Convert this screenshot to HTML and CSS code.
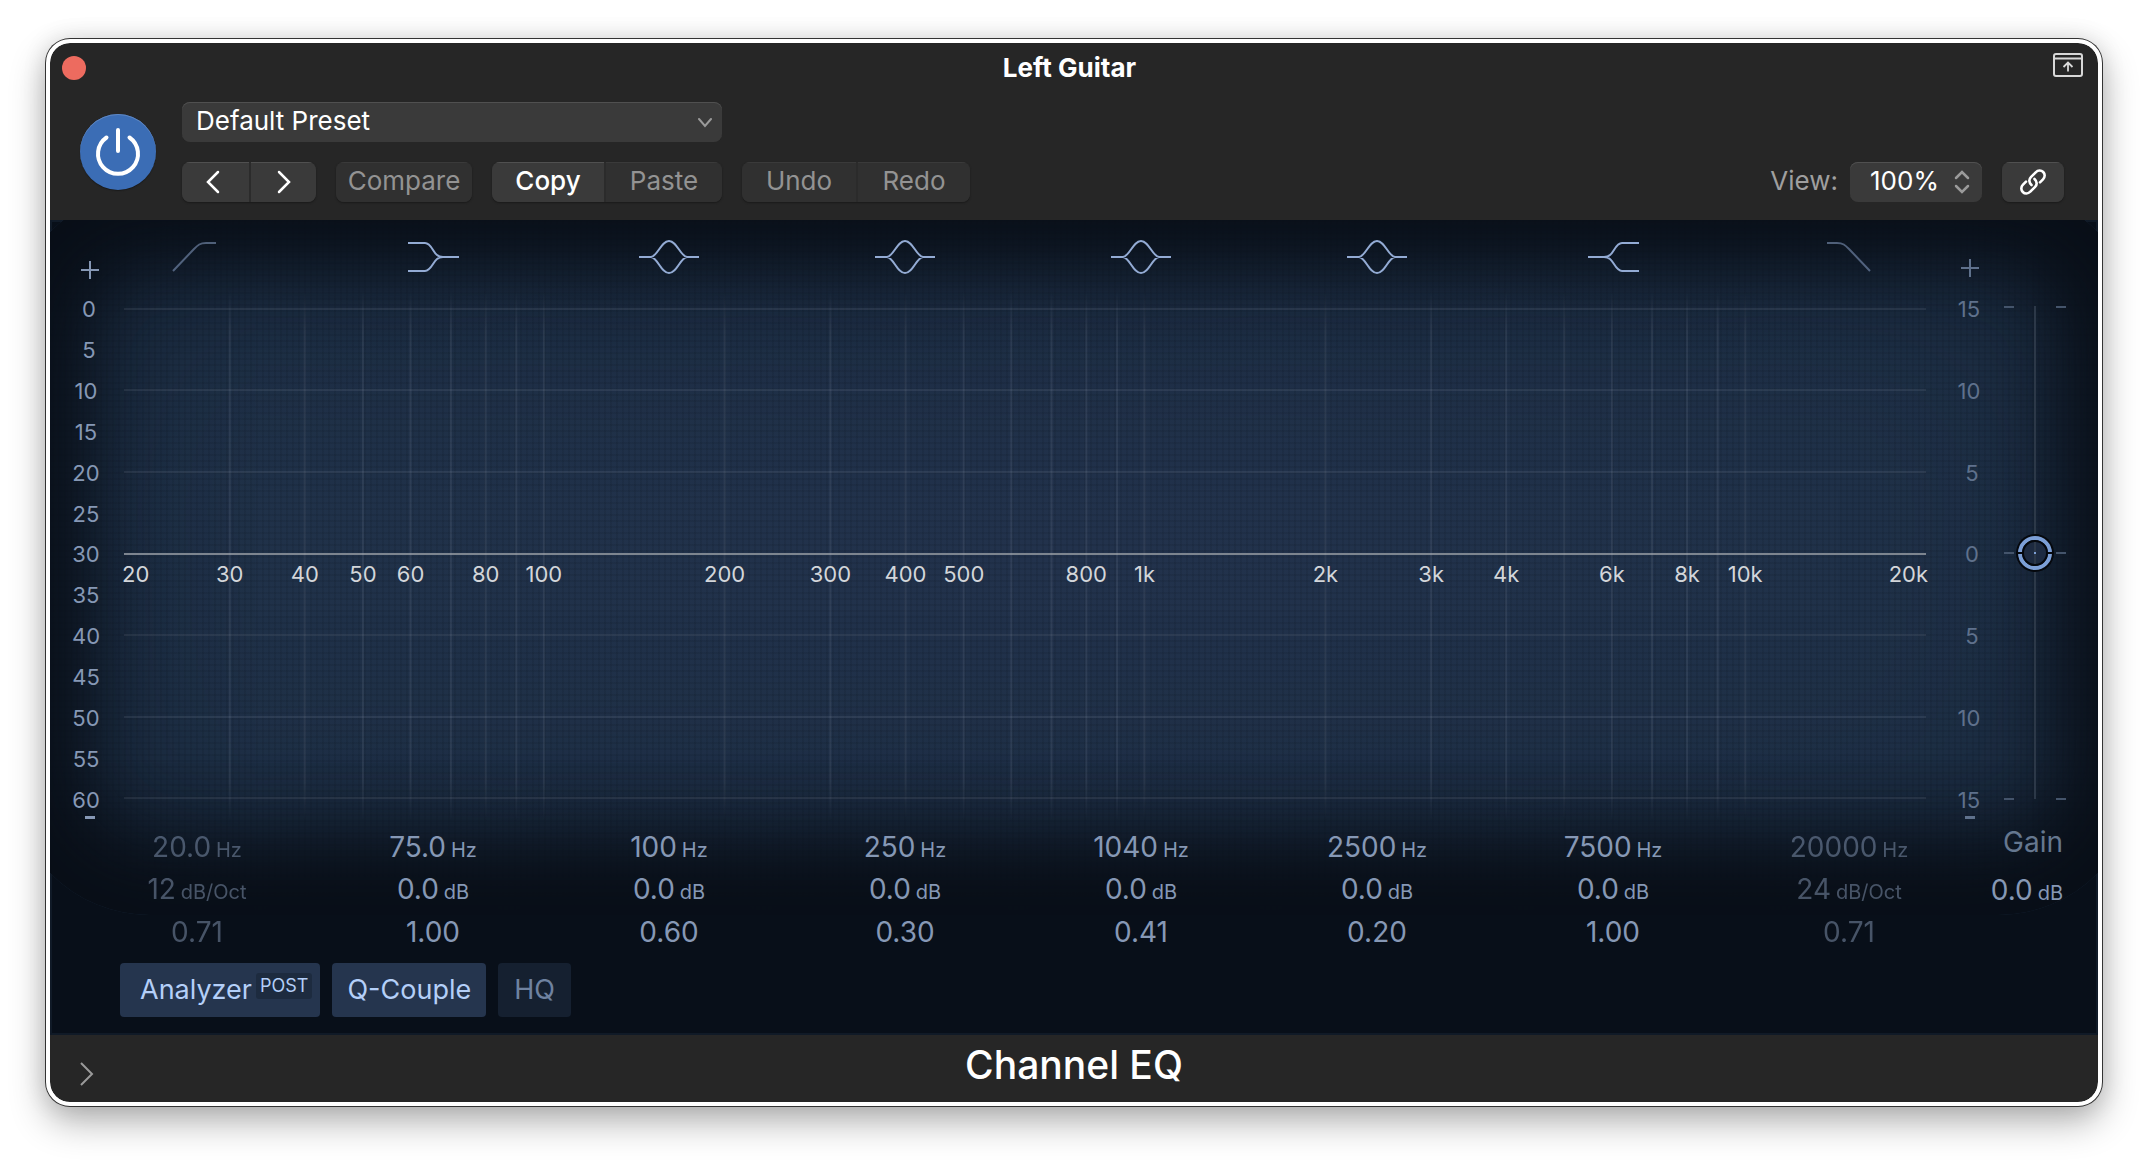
FILE: index.html
```html
<!DOCTYPE html>
<html lang="en">
<head>
<meta charset="utf-8">
<title>Channel EQ – Left Guitar</title>
<link rel="stylesheet" href="styles.css">
</head>
<body>
<main class="window">
  <header class="header">
    <div class="titlebar">
      <button class="close" type="button" aria-label="Close"></button>
      <h1 class="title">Left Guitar</h1>
      <button class="bare" type="button" aria-label="Pin window">
        <svg class="icon" width="30" height="24" viewBox="0 0 30 24"><rect x="1" y="1" width="28" height="22" rx="2" stroke-width="2"/><path d="M1 5.500H29" stroke-width="2"/><path d="M15 18.500V9.500M10.500 14L15 9.500L19.500 14" stroke-width="1.800"/></svg>
      </button>
    </div>
    <div class="controls">
      <button class="power" type="button" aria-label="Power">
        <svg class="icon" width="52" height="52" viewBox="0 0 52 52"><path d="M14.500 11.500A20 20 0 1 0 37.500 11.500M26 4V25" stroke-width="4" stroke-linecap="round"/></svg>
      </button>
      <div class="rows">
        <div class="picker preset">
          <select aria-label="Preset"><option>Default Preset</option></select>
          <svg class="icon picker-icon" width="14" height="10" viewBox="0 0 14 10"><path d="M1 1L7 8L13 1" stroke-width="2" stroke-linecap="round"/></svg>
        </div>
        <div class="row">
          <div class="group">
            <button type="button" class="nav prev" aria-label="Previous preset"><svg class="icon" width="14" height="24" viewBox="0 0 14 24"><path d="M12 2L2 12L12 22" stroke-width="2.500" stroke-linecap="round"/></svg></button>
            <button type="button" class="nav" aria-label="Next preset"><svg class="icon" width="14" height="24" viewBox="0 0 14 24"><path d="M2 2L12 12L2 22" stroke-width="2.500" stroke-linecap="round"/></svg></button>
          </div>
          <div class="group"><button type="button" class="compare" disabled>Compare</button></div>
          <div class="group">
            <button type="button" class="copy">Copy</button>
            <button type="button" class="paste" disabled>Paste</button>
          </div>
          <div class="group">
            <button type="button" class="undo" disabled>Undo</button>
            <button type="button" class="undo" disabled>Redo</button>
          </div>
          <div class="view">
            <label for="zoom">View:</label>
            <div class="picker zoom">
              <select id="zoom"><option>100%</option></select>
              <svg class="icon picker-icon" width="16" height="24" viewBox="0 0 16 24"><path d="M2 8L8 2L14 8M2 16L8 22L14 16" stroke-width="2.500" stroke-linecap="round"/></svg>
            </div>
            <div class="group"><button type="button" class="link" aria-label="Link"><svg class="icon" width="28" height="28" viewBox="0 0 28 28"><g stroke-width="2.600" stroke-linecap="round"><path d="M12.500 17C9.800 14.500 9.700 11.300 11.900 9.100L16.700 4.300C19 2 22.200 2 24.200 4C26.200 6 26.200 9.100 24 11.300L21 14.300"/><path d="M15.500 11C18.200 13.500 18.300 16.700 16.100 18.900L11.300 23.700C9 26 5.800 26 3.800 24C1.800 22 1.800 18.900 4 16.700L7 13.700"/></g></svg></button></div>
          </div>
        </div>
      </div>
    </div>
  </header>

  <section class="eq" aria-label="Equalizer">
    <div class="sign sign-left">
      <svg class="icon" width="18" height="18" viewBox="0 0 18 18"><path d="M9 0V18M0 9H18" stroke-width="2"/></svg>
    </div>
    <div class="bands">
      <button type="button" class="bare off" aria-label="Low cut"><svg class="icon" width="62" height="34" viewBox="0 0 62 34"><path d="M7 31L28 9C32 5 34 3 40 3H50" stroke-width="2"/></svg></button>
      <button type="button" class="bare" aria-label="Low shelf"><svg class="icon" width="62" height="34" viewBox="0 0 62 34"><path d="M6 3H23C29 3 31 12 35 15C37 17 38 17 41 17H57M6 31H23C29 31 31 22 35 19C37 17 38 17 41 17" stroke-width="2"/></svg></button>
      <button type="button" class="bare" aria-label="Peak 1"><svg class="icon" width="62" height="34" viewBox="0 0 62 34"><path d="M1 17H13C20 16 23 1 31 1S42 16 49 17H61M13 17C20 18 23 33 31 33S42 18 49 17" stroke-width="2"/></svg></button>
      <button type="button" class="bare" aria-label="Peak 2"><svg class="icon" width="62" height="34" viewBox="0 0 62 34"><path d="M1 17H13C20 16 23 1 31 1S42 16 49 17H61M13 17C20 18 23 33 31 33S42 18 49 17" stroke-width="2"/></svg></button>
      <button type="button" class="bare" aria-label="Peak 3"><svg class="icon" width="62" height="34" viewBox="0 0 62 34"><path d="M1 17H13C20 16 23 1 31 1S42 16 49 17H61M13 17C20 18 23 33 31 33S42 18 49 17" stroke-width="2"/></svg></button>
      <button type="button" class="bare" aria-label="Peak 4"><svg class="icon" width="62" height="34" viewBox="0 0 62 34"><path d="M1 17H13C20 16 23 1 31 1S42 16 49 17H61M13 17C20 18 23 33 31 33S42 18 49 17" stroke-width="2"/></svg></button>
      <button type="button" class="bare" aria-label="High shelf"><svg class="icon" width="62" height="34" viewBox="0 0 62 34"><path d="M57 3H40C34 3 32 12 28 15C26 17 25 17 22 17H6M57 31H40C34 31 32 22 28 19C26 17 25 17 22 17" stroke-width="2"/></svg></button>
      <button type="button" class="bare off" aria-label="High cut"><svg class="icon" width="62" height="34" viewBox="0 0 62 34"><path d="M9 3H19C25 3 27 5 31 9L52 31" stroke-width="2"/></svg></button>
    </div>
    <div class="sign sign-right">
      <svg class="icon" width="18" height="18" viewBox="0 0 18 18"><path d="M9 0V18M0 9H18" stroke-width="2"/></svg>
    </div>

    <ul class="scale scale-left">
      <li class="one">0</li><li class="one">5</li><li>10</li><li>15</li><li>20</li><li>25</li><li>30</li><li>35</li><li>40</li><li>45</li><li>50</li><li>55</li><li>60</li>
    </ul>
    <div class="plot">
      <svg class="levels">
        <path d="M0 20H4000M0 101H4000M0 183H4000M0 346H4000M0 428H4000M0 509H4000"/>
        <path class="zero" d="M0 265H4000"/>
      </svg>
      <svg class="pitches">
        <line x1="5.87%" x2="5.87%" y2="100%"/><line x1="10.03%" x2="10.03%" y2="100%"/><line x1="13.26%" x2="13.26%" y2="100%"/><line x1="15.90%" x2="15.90%" y2="100%"/><line x1="18.14%" x2="18.14%" y2="100%"/><line x1="20.07%" x2="20.07%" y2="100%"/><line x1="21.77%" x2="21.77%" y2="100%"/><line x1="23.30%" x2="23.30%" y2="100%"/>
        <line x1="33.33%" x2="33.33%" y2="100%"/><line x1="39.20%" x2="39.20%" y2="100%"/><line x1="43.37%" x2="43.37%" y2="100%"/><line x1="46.60%" x2="46.60%" y2="100%"/><line x1="49.24%" x2="49.24%" y2="100%"/><line x1="51.47%" x2="51.47%" y2="100%"/><line x1="53.40%" x2="53.40%" y2="100%"/><line x1="55.11%" x2="55.11%" y2="100%"/><line x1="56.63%" x2="56.63%" y2="100%"/>
        <line x1="66.67%" x2="66.67%" y2="100%"/><line x1="72.54%" x2="72.54%" y2="100%"/><line x1="76.70%" x2="76.70%" y2="100%"/><line x1="79.93%" x2="79.93%" y2="100%"/><line x1="82.57%" x2="82.57%" y2="100%"/><line x1="84.80%" x2="84.80%" y2="100%"/><line x1="86.74%" x2="86.74%" y2="100%"/><line x1="88.44%" x2="88.44%" y2="100%"/><line x1="89.97%" x2="89.97%" y2="100%"/>
      </svg>
      <ul class="freqs">
        <li class="first">20</li>
        <li style="left:5.87%">30</li><li style="left:10.03%">40</li><li style="left:13.26%">50</li><li style="left:15.90%">60</li><li style="left:20.07%">80</li><li style="left:23.30%">100</li>
        <li style="left:33.33%">200</li><li style="left:39.20%">300</li><li style="left:43.37%">400</li><li style="left:46.60%">500</li><li style="left:53.40%">800</li><li style="left:56.63%">1k</li>
        <li style="left:66.67%">2k</li><li style="left:72.54%">3k</li><li style="left:76.70%">4k</li><li style="left:82.57%">6k</li><li style="left:86.74%">8k</li><li style="left:89.97%">10k</li>
        <li class="last">20k</li>
      </ul>
    </div>
    <ul class="scale scale-right">
      <li>15</li><li>10</li><li class="one">5</li><li class="one">0</li><li class="one">5</li><li>10</li><li>15</li>
    </ul>
    <svg class="fader" width="64" height="533" viewBox="0 0 64 533" role="img" aria-label="Gain fader">
      <path class="track" d="M32 17V510"/>
      <path class="ticks" d="M1 18H11M53 18H63M1 264H11M53 264H63M1 510H11M53 510H63"/>
      <circle cx="32" cy="264" r="19" fill="#05080d"/>
      <circle cx="32" cy="264" r="15" fill="#1d2a40" stroke="#7c9fd6" stroke-width="4"/>
      <circle cx="32" cy="264" r="12" fill="none" stroke="#05080d" stroke-width="2"/>
      <path d="M13 264H20M44 264H51" stroke="#05080d" stroke-width="2"/>
      <path class="track" d="M32 253V275"/>
      <rect x="31" y="263" width="2" height="2" fill="#7c9fd6"/>
    </svg>
    <div class="minus minus-left"></div>
    <div class="minus minus-right"></div>

    <table class="values">
      <tr><td class="off">20.0 <small>Hz</small></td><td>75.0 <small>Hz</small></td><td>100 <small>Hz</small></td><td>250 <small>Hz</small></td><td>1040 <small>Hz</small></td><td>2500 <small>Hz</small></td><td>7500 <small>Hz</small></td><td class="off">20000 <small>Hz</small></td></tr>
      <tr><td class="off">12 <small>dB/Oct</small></td><td>0.0 <small>dB</small></td><td>0.0 <small>dB</small></td><td>0.0 <small>dB</small></td><td>0.0 <small>dB</small></td><td>0.0 <small>dB</small></td><td>0.0 <small>dB</small></td><td class="off">24 <small>dB/Oct</small></td></tr>
      <tr><td class="off">0.71</td><td>1.00</td><td>0.60</td><td>0.30</td><td>0.41</td><td>0.20</td><td>1.00</td><td class="off">0.71</td></tr>
    </table>
    <div class="gain">
      <span class="gain-label">Gain</span>
      <span>0.0 <small>dB</small></span>
    </div>

    <div class="modes">
      <button type="button" class="mode analyzer">Analyzer<span class="post">POST</span></button>
      <button type="button" class="mode">Q-Couple</button>
      <button type="button" class="mode mode-off">HQ</button>
    </div>
  </section>

  <footer class="footer">
    <button class="bare" type="button" aria-label="Show more"><svg class="icon" width="14" height="24" viewBox="0 0 14 24"><path d="M1 1L12 12L1 23" stroke-width="2"/></svg></button>
    <h2 class="name">Channel EQ</h2>
  </footer>
</main>
</body>
</html>
```

FILE: styles.css
```css
* {
  box-sizing: border-box;
}

body {
  margin: 0;
  padding: 39px 46px 54px;
  background: #fff;
  color: #fff;
  font: 26px/32px Inter, "Liberation Sans", sans-serif;
}

button,
select {
  margin: 0;
  padding: 0;
  border: 0;
  background: none;
  color: inherit;
  font: inherit;
}

h1,
h2,
ul {
  margin: 0;
  padding: 0;
  list-style: none;
}

.icon {
  display: block;
  fill: none;
  stroke: currentColor;
}

.bare {
  display: block;
}

.window {
  border: 4px solid #fff;
  border-radius: 24px;
  background: linear-gradient(#262626, #262626) padding-box, #fff;
  box-shadow: 0 0 0 1px #333, 0 16px 36px rgba(0, 0, 0, 0.3), 0 0 24px rgba(0, 0, 0, 0.12);
  overflow: hidden;
}

/* Header */

.header {
  height: 177px;
  padding: 9px 34px 0 12px;
}

.titlebar {
  display: flex;
  align-items: center;
  height: 32px;
  margin-right: -19px;
}

.close {
  width: 24px;
  height: 24px;
  border-radius: 50%;
  background: #ed6b5f;
}

.title {
  flex: 1;
  color: #fff;
  font-size: 26px;
  font-weight: 700;
  text-align: center;
}

.titlebar .bare {
  align-self: flex-start;
  padding-top: 1px;
  color: #d8d8d8;
}

.controls {
  display: flex;
  gap: 26px;
  padding: 18px 0 0 18px;
}

.power {
  display: grid;
  place-items: center;
  width: 76px;
  height: 76px;
  margin-top: 12px;
  border-radius: 50%;
  background: #3b6db5;
  box-shadow: inset 0 1px 0 #5f87c2, 0 1px 1px #1a1a1a;
}

.rows {
  display: flex;
  flex: 1;
  flex-direction: column;
  gap: 20px;
}

.row,
.view {
  display: flex;
  gap: 20px;
}

.group,
.picker {
  display: flex;
  height: 40px;
  border-radius: 8px;
  background: #303030;
  box-shadow: 0 1px 2px #191919;
  overflow: hidden;
}

.group button,
.picker {
  background: #3a3a3a;
  box-shadow: inset 0 1px 0 #505050;
}

.group button {
  display: grid;
  place-items: center;
  padding-bottom: 3px;
}

.group button + button {
  border-left: 2px solid #2b2b2b;
}

.group button:disabled {
  background: #303030;
  box-shadow: inset 0 1px 0 #3a3a3a;
  color: #939393;
}

.group .nav {
  width: 67px;
  padding-bottom: 0;
}

.group .prev {
  padding-right: 6px;
}

.compare {
  width: 136px;
}

.copy {
  width: 112px;
  font-weight: 500;
}

.paste {
  width: 118px;
}

.undo {
  width: 114px;
}

.group .link {
  width: 62px;
  padding-bottom: 0;
}

.picker {
  position: relative;
}

.picker select {
  width: 100%;
  padding: 0 14px 3px;
  appearance: none;
}

.picker-icon {
  position: absolute;
  top: 16px;
  right: 10px;
  color: #9a9a9a;
  pointer-events: none;
}

.preset {
  width: 540px;
}

.zoom {
  width: 132px;
}

.zoom select {
  padding-left: 20px;
}

.zoom .picker-icon {
  top: 8px;
  right: 12px;
}

.view {
  margin-left: auto;
}

.view label {
  margin-right: -8px;
  padding-top: 3px;
  color: #9f9f9f;
}

/* Equalizer */

.eq {
  position: relative;
  isolation: isolate;
  display: grid;
  grid-template-columns: 29px 45px 1fr 41px 131px;
  grid-template-rows: 69px 533px auto auto;
  padding-bottom: 18px;
  background: #080f19;
  box-shadow: inset 0 0 0 2px #101a27;
  color: #8698b5;
  overflow: hidden;
}

/* Lit display area that fades out towards the panel's edges */
.eq::before {
  content: "";
  position: absolute;
  z-index: -1;
  inset: -30px -40px 120px;
  border-radius: 140px;
  background:
    repeating-linear-gradient(90deg, rgba(8, 16, 26, 0.1) 0 2px, transparent 2px 6px),
    repeating-linear-gradient(rgba(8, 16, 26, 0.1) 0 2px, transparent 2px 6px),
    radial-gradient(closest-side, #22324c, #1f3148);
  box-shadow:
    inset 0 0 70px 76px #090f18,
    inset 0 0 200px 60px rgba(9, 15, 24, 0.6);
}

.off {
  opacity: 0.5;
}

.sign {
  grid-row: 1;
  align-self: end;
  margin-bottom: 10px;
}

.sign-left {
  grid-column: 1 / 3;
  padding-left: 31px;
}

.sign-right {
  grid-column: 4 / 6;
  margin-bottom: 12px;
  padding-left: 35px;
  color: #5f718c;
}

.bands {
  grid-area: 1 / 2 / 2 / 5;
  display: grid;
  grid-template-columns: repeat(8, 1fr);
  justify-items: center;
  align-items: start;
  padding-top: 20px;
  color: #93abd4;
}

.scale {
  display: flex;
  flex-direction: column;
  justify-content: space-between;
  grid-row: 2;
  padding: 9px 0 11px;
  font-size: 22px;
  line-height: 22px;
  text-align: center;
}

.scale-left {
  grid-column: 1 / 3;
  width: 72px;
}

.scale-left .one {
  padding-left: 6px;
}

.scale-right {
  grid-column: 4 / 6;
  width: 86px;
  color: #5f718c;
}

.scale-right .one {
  padding-left: 6px;
}

.minus {
  grid-row: 2;
  align-self: end;
  width: 10px;
  height: 3px;
  margin-bottom: 3px;
  background: currentColor;
}

.minus-left {
  grid-column: 1 / 3;
  margin-left: 35px;
}

.minus-right {
  grid-column: 4 / 6;
  margin-left: 39px;
  color: #5f718c;
}

.plot {
  grid-area: 2 / 3;
  position: relative;
}

.levels,
.pitches {
  position: absolute;
  inset: 0;
  width: 100%;
  height: 100%;
  stroke: rgba(170, 185, 200, 0.11);
  stroke-width: 2;
}

.levels .zero {
  stroke: #7d858f;
}

.pitches {
  mask-image: linear-gradient(transparent, #000 8%, #000 92%, transparent);
}

.freqs li {
  position: absolute;
  top: 274px;
  width: 60px;
  margin-left: -30px;
  color: #d3d6da;
  font-size: 22px;
  line-height: 22px;
  text-align: center;
}

.freqs .first {
  left: 0;
  margin-left: -2px;
  text-align: left;
}

.freqs .last {
  right: -2px;
  text-align: right;
}

.fader {
  grid-area: 2 / 5;
  justify-self: end;
  margin-right: 31px;
}

.track {
  stroke: #2c3848;
  stroke-width: 2;
}

.ticks {
  stroke: #44546b;
  stroke-width: 2;
}

.values {
  grid-area: 3 / 2 / 4 / 5;
  width: 100%;
  margin-top: 5px;
  border-collapse: collapse;
  table-layout: fixed;
  font-size: 28px;
  text-align: center;
}

.values td {
  height: 42px;
  padding: 0;
}

small {
  margin-left: -3px;
  font-size: 20px;
}

.gain {
  grid-area: 3 / 5;
  display: flex;
  flex-direction: column;
  gap: 16px;
  padding: 4px 35px 0 0;
  font-size: 28px;
  text-align: right;
}

.gain-label {
  color: #65778f;
}

.modes {
  grid-area: 4 / 1 / 5 / 6;
  display: flex;
  gap: 12px;
  padding: 10px 0 0 70px;
}

.mode {
  display: flex;
  align-items: center;
  height: 54px;
  padding: 0 15px;
  border-radius: 4px;
  background: #25354e;
  color: #b4cff8;
  font-size: 27px;
}

.analyzer {
  padding: 0 8px 0 20px;
}

.post {
  margin: -8px 0 0 4px;
  padding: 0 4px;
  border-radius: 3px;
  background: #1d2b3f;
  font-size: 18px;
  line-height: 26px;
}

.mode-off {
  padding: 0 16px;
  background: #152030;
  color: #6f82a0;
}

/* Footer */

.footer {
  display: flex;
  align-items: center;
  height: 67px;
  padding: 0 30px;
  color: #9a9a9a;
}

.footer .bare {
  width: 14px;
  padding-top: 10px;
}

.name {
  flex: 1;
  margin-right: 14px;
  padding-bottom: 8px;
  color: #fff;
  font-size: 39px;
  font-weight: 500;
  line-height: 48px;
  text-align: center;
}
```
